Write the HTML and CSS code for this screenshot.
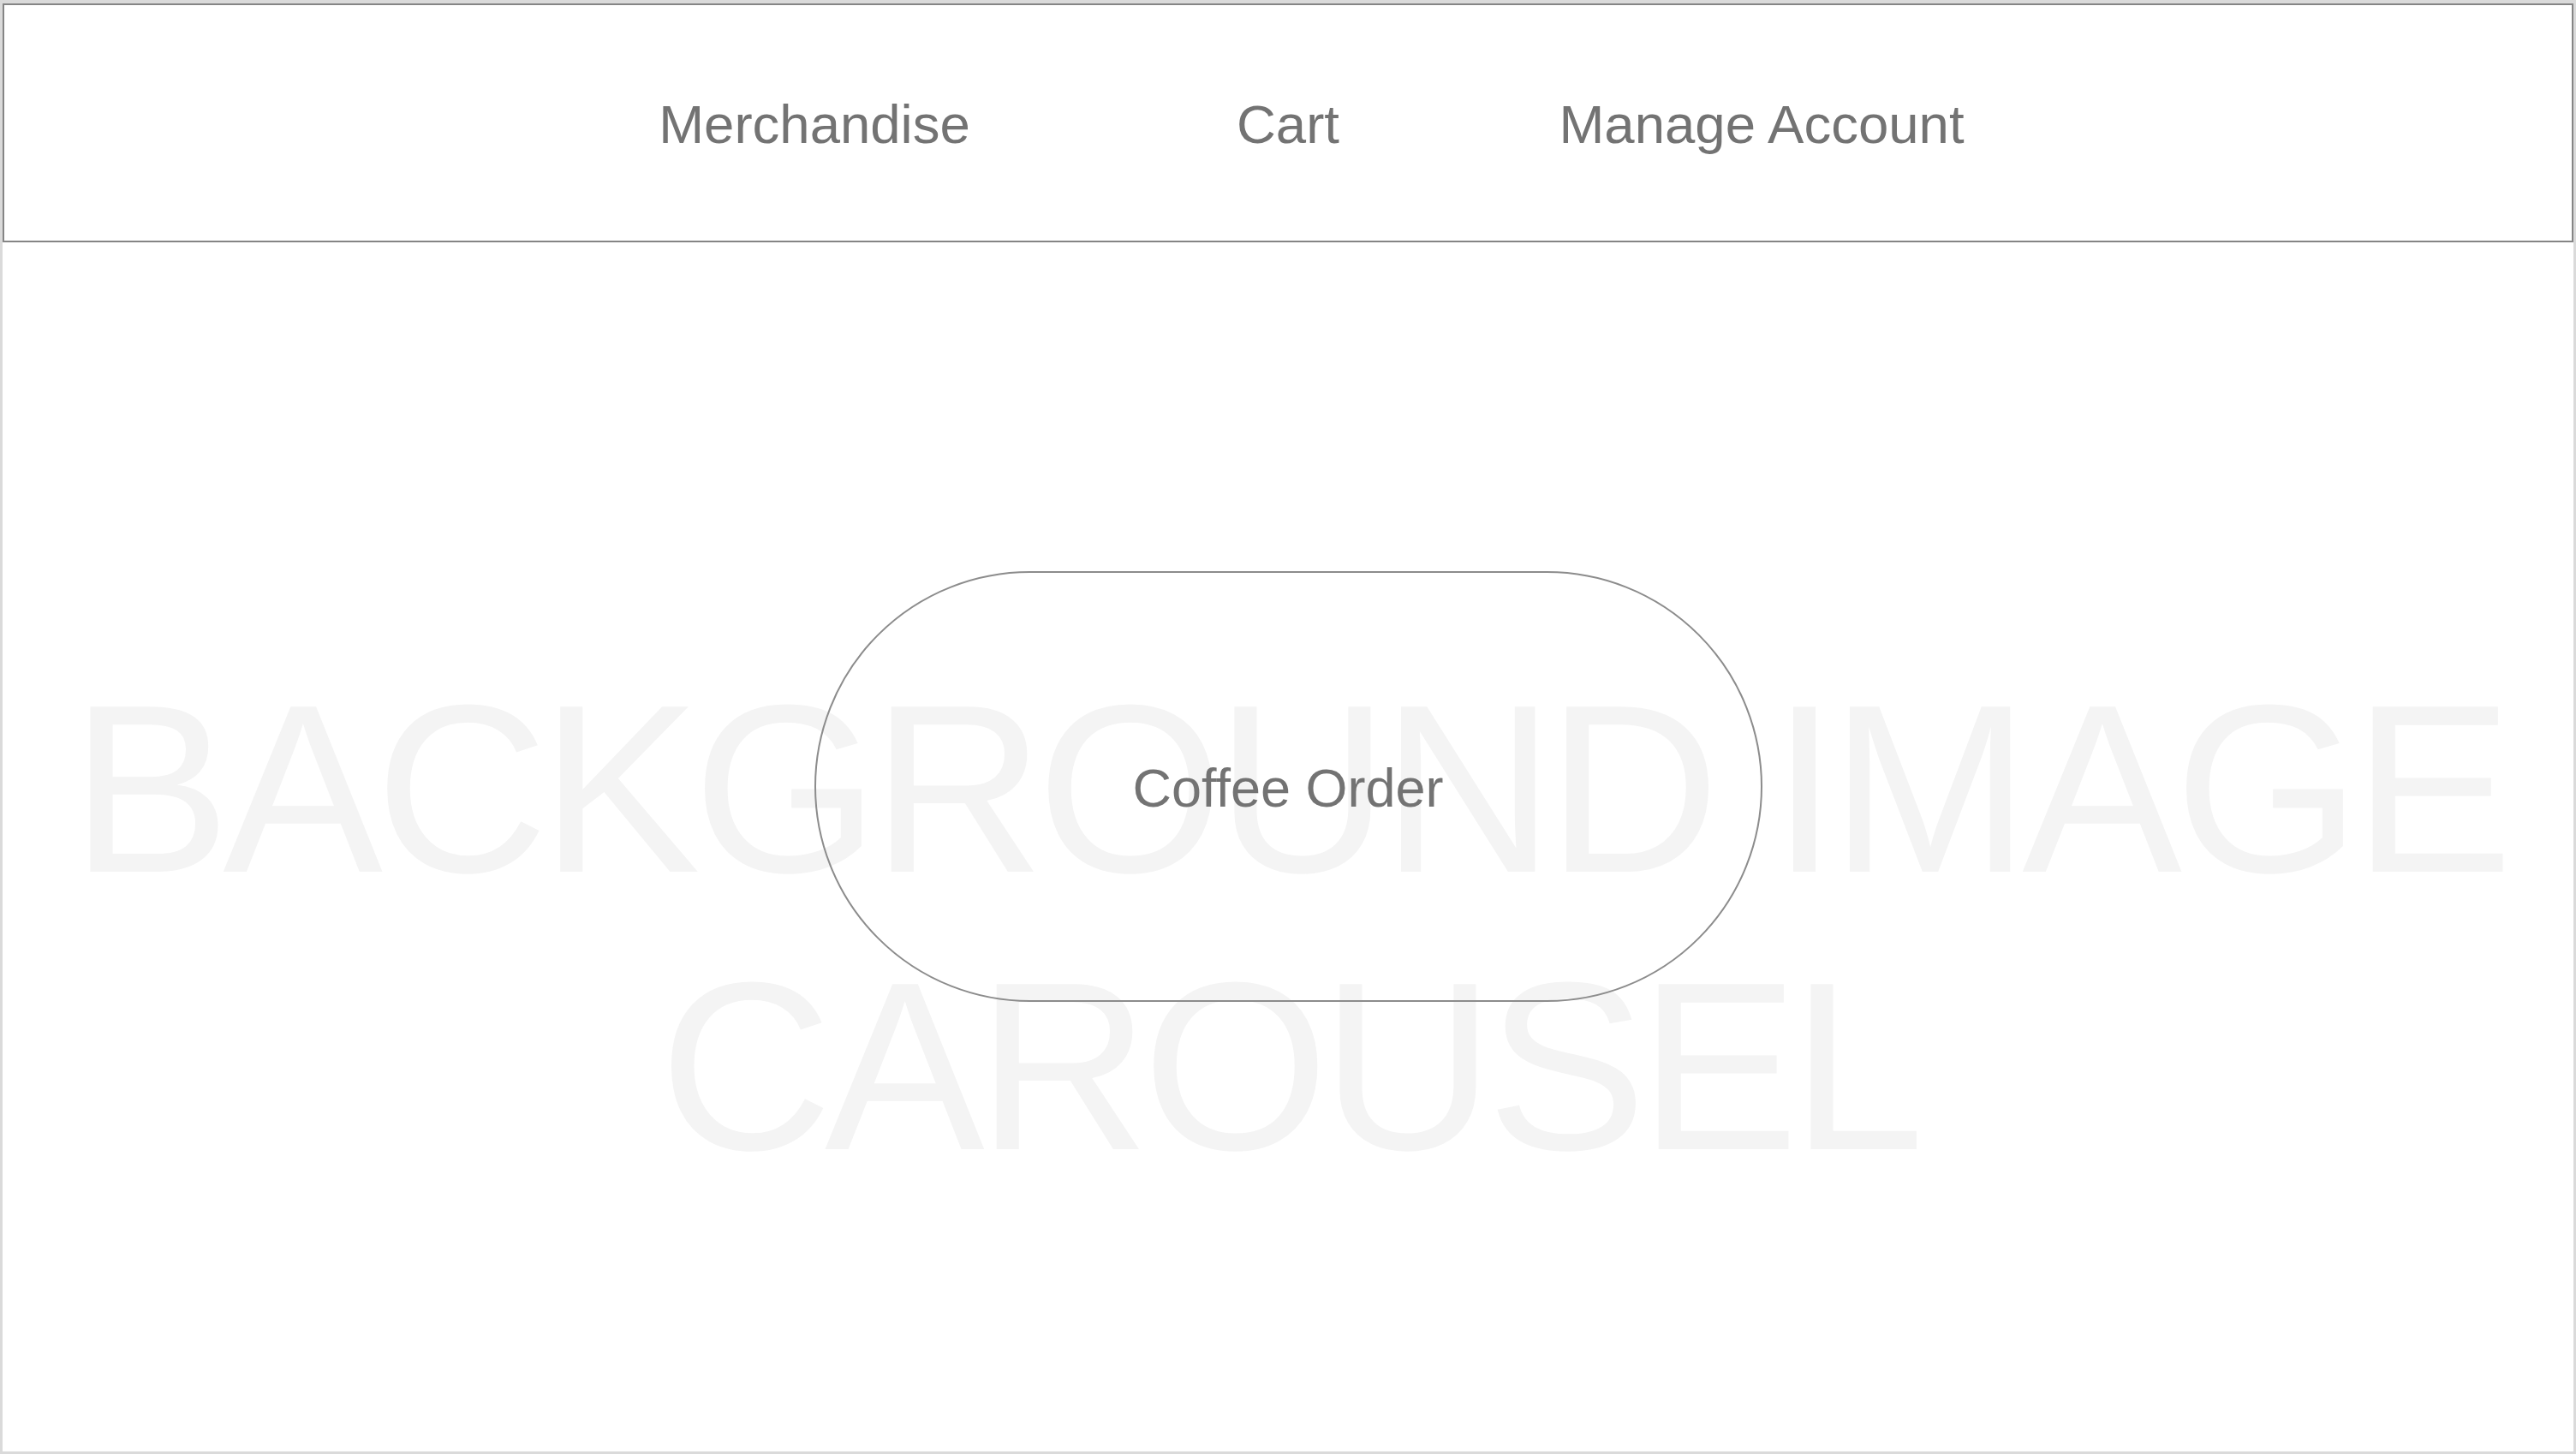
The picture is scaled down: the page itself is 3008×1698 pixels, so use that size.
FILE: index.html
```html
<!DOCTYPE html>
<html lang="en">
<head>
<meta charset="utf-8">
<title>Coffee Shop</title>
<link rel="stylesheet" href="styles.css">
</head>
<body>
<div class="frame">
  <header class="header">
    <nav class="nav">
      <a class="nav-link" href="#">Merchandise</a>
      <a class="nav-link" href="#">Cart</a>
      <a class="nav-link" href="#">Manage Account</a>
    </nav>
  </header>
  <main class="hero">
    <div class="hero-bg">BACKGROUND IMAGE<br>CAROUSEL</div>
    <button class="order-btn" type="button">Coffee Order</button>
  </main>
</div>
</body>
</html>
```

FILE: styles.css
```css
html, body {
  margin: 0;
  padding: 0;
  background: #ffffff;
}

body {
  width: 3008px;
  height: 1698px;
  font-family: "Liberation Sans", Arial, Helvetica, sans-serif;
}

.frame {
  box-sizing: border-box;
  width: 3008px;
  height: 1698px;
  border: 3px solid #dadada;
  border-top-width: 4px;
  display: flex;
  flex-direction: column;
  background: #ffffff;
}

.header {
  box-sizing: border-box;
  height: 279px;
  flex: 0 0 auto;
  border: 2px solid #858585;
  padding-top: 3px;
  display: flex;
  align-items: center;
  justify-content: center;
}

.nav {
  display: grid;
  grid-template-columns: repeat(3, 553px);
  align-items: center;
}

.nav-link {
  text-align: center;
  font-size: 63.5px;
  color: #737373;
  text-decoration: none;
  white-space: nowrap;
}

.hero {
  flex: 1 1 auto;
  display: grid;
  grid-template-columns: 1fr;
  grid-template-rows: auto;
}

.hero-bg {
  grid-area: 1 / 1;
  align-self: start;
  margin-top: 476px;
  text-align: center;
  font-size: 280px;
  line-height: 324px;
  letter-spacing: -9px;
  color: #f4f4f4;
  white-space: nowrap;
}

.order-btn {
  grid-area: 1 / 1;
  justify-self: center;
  align-self: start;
  margin-top: 384px;
  box-sizing: border-box;
  width: 1107px;
  height: 503px;
  border: 2px solid #8c8c8c;
  border-radius: 252px;
  background: transparent;
  padding: 3px 0 0 0;
  font-family: "Liberation Sans", Arial, Helvetica, sans-serif;
  font-size: 63px;
  color: #737373;
  cursor: pointer;
}
```
